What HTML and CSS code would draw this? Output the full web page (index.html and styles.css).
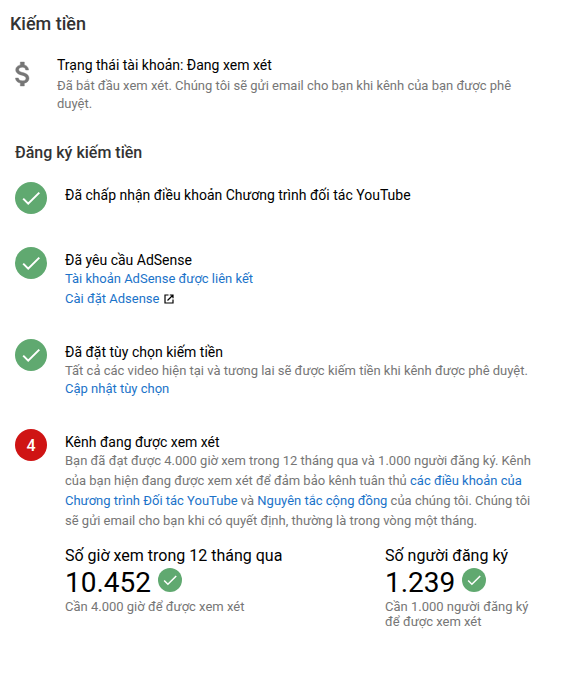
FILE: index.html
```
<!doctype html>
<html lang="vi">
  <head>
    <meta charset="UTF-8" />
    <meta name="viewport" content="width=device-width, initial-scale=1.0" />
    <title>Kiếm tiền</title>
    <link rel="stylesheet" href="styles.css">
  </head>
  <body>
    <svg class="sprite" aria-hidden="true">
      <symbol id="check" viewBox="0 0 32 32">
        <circle cx="16" cy="16" r="16" fill="#60a970" />
        <path d="M8.200 16.600l5 5.100L24.300 10.600" fill="none" stroke="#fff" stroke-width="2" />
      </symbol>
    </svg>

    <h1 class="page-title">Kiếm tiền</h1>

    <section class="status">
      <svg class="status-icon" viewBox="0 0 24 24">
        <path d="M11.8 10.9c-2.27-.59-3-1.2-3-2.15 0-1.09 1.01-1.85 2.7-1.85 1.78 0 2.44.85 2.5 2.1h2.21c-.07-1.72-1.12-3.3-3.21-3.81V3h-3v2.16c-1.94.42-3.5 1.68-3.5 3.61 0 2.31 1.91 3.46 4.7 4.13 2.5.6 3 1.48 3 2.41 0 .69-.49 1.79-2.7 1.79-2.06 0-2.87-.92-2.98-2.1h-2.2c.12 2.19 1.76 3.42 3.68 3.83V21h3v-2.15c1.95-.37 3.5-1.5 3.5-3.55 0-2.84-2.43-3.81-4.7-4.4z" />
      </svg>
      <div class="status-body">
        <h3 class="item-title">Trạng thái tài khoản: Đang xem xét</h3>
        <p class="text">Đã bắt đầu xem xét. Chúng tôi sẽ gửi email cho bạn khi kênh của bạn được phê duyệt.</p>
      </div>
    </section>

    <h2 class="section-title">Đăng ký kiếm tiền</h2>

    <ol class="steps">
      <li class="step step-terms">
        <svg class="step-icon"><use href="#check" /></svg>
        <div class="step-body">
          <h3 class="item-title">Đã chấp nhận điều khoản Chương trình đối tác YouTube</h3>
        </div>
      </li>

      <li class="step step-adsense">
        <svg class="step-icon"><use href="#check" /></svg>
        <div class="step-body">
          <h3 class="item-title">Đã yêu cầu AdSense</h3>
          <p class="text loose"><a href="#">Tài khoản AdSense được liên kết</a></p>
          <p class="text loose link-row">
            <a href="#">Cài đặt Adsense</a>
            <svg class="external" viewBox="0 0 10 10">
              <path d="M4.500 1H1v8h8V5.500M5.800 1H9v3.200M9 1L3.500 6.500" />
            </svg>
          </p>
        </div>
      </li>

      <li class="step step-options">
        <svg class="step-icon"><use href="#check" /></svg>
        <div class="step-body">
          <h3 class="item-title">Đã đặt tùy chọn kiếm tiền</h3>
          <p class="text">Tất cả các video hiện tại và tương lai sẽ được kiếm tiền khi kênh được phê duyệt.</p>
          <p class="text"><a href="#">Cập nhật tùy chọn</a></p>
        </div>
      </li>

      <li class="step">
        <span class="step-number">4</span>
        <div class="step-body">
          <h3 class="item-title">Kênh đang được xem xét</h3>
          <p class="text loose">Bạn đã đạt được 4.000 giờ xem trong 12 tháng qua và 1.000 người đăng ký. Kênh của bạn hiện đang được xem xét để đảm bảo kênh tuân thủ <a href="#">các điều khoản của Chương trình Đối tác YouTube</a> và <a href="#">Nguyên tắc cộng đồng</a> của chúng tôi. Chúng tôi sẽ gửi email cho bạn khi có quyết định, thường là trong vòng một tháng.</p>
          <div class="stats">
            <div class="stat">
              <div class="stat-label">Số giờ xem trong 12 tháng qua</div>
              <div class="stat-value">10.452 <svg class="stat-icon"><use href="#check" /></svg></div>
              <div class="stat-note">Cần 4.000 giờ để được xem xét</div>
            </div>
            <div class="stat">
              <div class="stat-label">Số người đăng ký</div>
              <div class="stat-value">1.239 <svg class="stat-icon"><use href="#check" /></svg></div>
              <div class="stat-note">Cần 1.000 người đăng ký để được xem xét</div>
            </div>
          </div>
        </div>
      </li>
    </ol>
  </body>
</html>
```
FILE: styles.css
```
body {
  margin: 0;
  padding: 14px 0 0 10px;
  background: #fff;
  color: #000;
  font-family: Roboto, "Noto Sans", sans-serif;
}
h1, h2, h3, p, ol {
  margin: 0;
  padding: 0;
}
a {
  color: #1b73c9;
  text-decoration: none;
}
.sprite {
  display: none;
}
.page-title {
  color: #333;
  font-size: 18px;
  line-height: 20px;
  font-weight: 500;
}
.status {
  display: flex;
  margin-top: 22px;
}
.status-icon {
  width: 32px;
  height: 32px;
  margin: 2px 18px 0 -3px;
  fill: #767676;
  stroke: #767676;
  stroke-width: 0.3;
}
.status-body {
  width: 480px;
}
.item-title {
  font-size: 14px;
  line-height: 18px;
  font-weight: 400;
}
.text {
  color: #767676;
  font-size: 13px;
  line-height: 18px;
}
.status .text {
  margin-top: 3px;
}
.text.loose {
  line-height: 20px;
}
.section-title {
  margin: 30px 0 0 5px;
  color: #333;
  font-size: 16px;
  line-height: 20px;
  font-weight: 500;
}
.steps {
  margin: 19px 0 0 5px;
  list-style: none;
}
.step {
  display: flex;
  gap: 18px;
}
.step-terms {
  height: 65px;
}
.step-adsense {
  height: 92px;
}
.step-options {
  height: 90px;
}
.step-options .item-title {
  margin-bottom: 1px;
}
.step-icon,
.step-number {
  flex: none;
  width: 32px;
  height: 32px;
}
.step-number {
  border-radius: 50%;
  background: #cf1414;
  color: #fff;
  font-size: 16px;
  line-height: 33px;
  font-weight: 500;
  text-align: center;
}
.step-body {
  width: 475px;
  padding-top: 4px;
}
.link-row {
  display: flex;
  align-items: center;
  gap: 5px;
}
.external {
  width: 10px;
  height: 10px;
  fill: none;
  stroke: #000;
  stroke-width: 1.2;
}
.stats {
  display: grid;
  grid-template-columns: 320px 150px;
  margin-top: 15px;
}
.stat-label {
  font-size: 16px;
  line-height: 20px;
}
.stat-value {
  display: flex;
  align-items: center;
  gap: 7px;
  height: 34px;
  margin-top: -1px;
  font-size: 28px;
}
.stat-icon {
  width: 24px;
  height: 24px;
  margin-top: -4px;
}
.stat-note {
  color: #767676;
  font-size: 13px;
  line-height: 15px;
}
```
